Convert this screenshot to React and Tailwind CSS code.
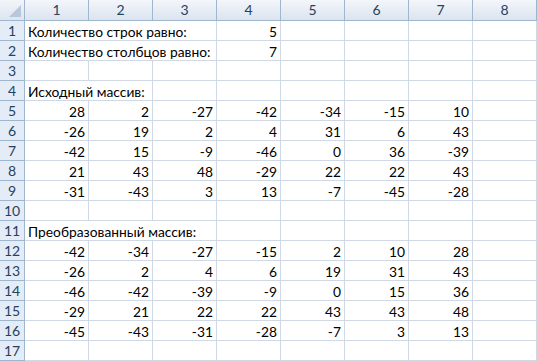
import React from "react";

const src = [
  [28, 2, -27, -42, -34, -15, 10],
  [-26, 19, 2, 4, 31, 6, 43],
  [-42, 15, -9, -46, 0, 36, -39],
  [21, 43, 48, -29, 22, 22, 43],
  [-31, -43, 3, 13, -7, -45, -28],
];
const dst = [
  [-42, -34, -27, -15, 2, 10, 28],
  [-26, 2, 4, 6, 19, 31, 43],
  [-46, -42, -39, -9, 0, 15, 36],
  [-29, 21, 22, 22, 43, 43, 48],
  [-45, -43, -31, -28, -7, 3, 13],
];

function buildRows() {
  const rows = [];
  const blanks = (n) => Array.from({ length: n }, () => ({ span: 1, text: "" }));
  rows.push([{ span: 3, text: "Количество строк равно:" }, { span: 1, text: "5", right: true }, ...blanks(4)]);
  rows.push([{ span: 3, text: "Количество столбцов равно:" }, { span: 1, text: "7", right: true }, ...blanks(4)]);
  rows.push(blanks(8));
  rows.push([{ span: 2, text: "Исходный массив:" }, ...blanks(6)]);
  src.forEach((r) => rows.push([...r.map((v) => ({ span: 1, text: String(v), right: true })), ...blanks(1)]));
  rows.push(blanks(8));
  rows.push([{ span: 3, text: "Преобразованный массив:" }, ...blanks(5)]);
  dst.forEach((r) => rows.push([...r.map((v) => ({ span: 1, text: String(v), right: true })), ...blanks(1)]));
  rows.push(blanks(8));
  return rows;
}

const spanCls = { 1: "col-span-1", 2: "col-span-2", 3: "col-span-3" };

export default function App() {
  const rows = buildRows();
  return (
    <div
      className="w-[537px] h-[361px] bg-white overflow-hidden text-black"
      style={{ fontFamily: "Lato, 'Noto Sans', sans-serif" }}
    >
      <div className="grid grid-cols-[25px_repeat(8,64px)] auto-rows-[20px] grid-rows-[21px]">
        <div className="relative h-[21px] border-r border-b border-[#9eb6ce] bg-gradient-to-b from-[#f2f5fa] to-[#dde5f0]">
          <div className="absolute right-[3px] bottom-[3px] w-0 h-0 border-l-[12px] border-l-transparent border-b-[12px] border-b-[#b8c8db]" />
        </div>
        {Array.from({ length: 8 }, (_, i) => (
          <div
            key={i}
            className="h-[21px] flex items-center justify-center border-r border-b border-[#9eb6ce] bg-gradient-to-b from-[#f3f6fb] to-[#dce4ef] text-[14px] text-[#27415f] leading-none"
          >
            {i + 1}
          </div>
        ))}
        {rows.map((r, ri) => (
          <React.Fragment key={ri}>
            <div className="h-[20px] flex items-center justify-center border-r border-b border-[#9eb6ce] bg-[#e4ecf7] text-[14px] text-[#27415f] leading-none">
              {ri + 1}
            </div>
            {r.map((c, ci) => (
              <div
                key={ci}
                className={`${spanCls[c.span]} h-[20px] flex items-end pb-[1px] border-r border-b border-[#d0d7e5] text-[13.8px] leading-none whitespace-nowrap ${c.right ? "justify-end pr-[3px]" : "pl-[3px]"}`}
              >
                {c.text}
              </div>
            ))}
          </React.Fragment>
        ))}
      </div>
    </div>
  );
}
